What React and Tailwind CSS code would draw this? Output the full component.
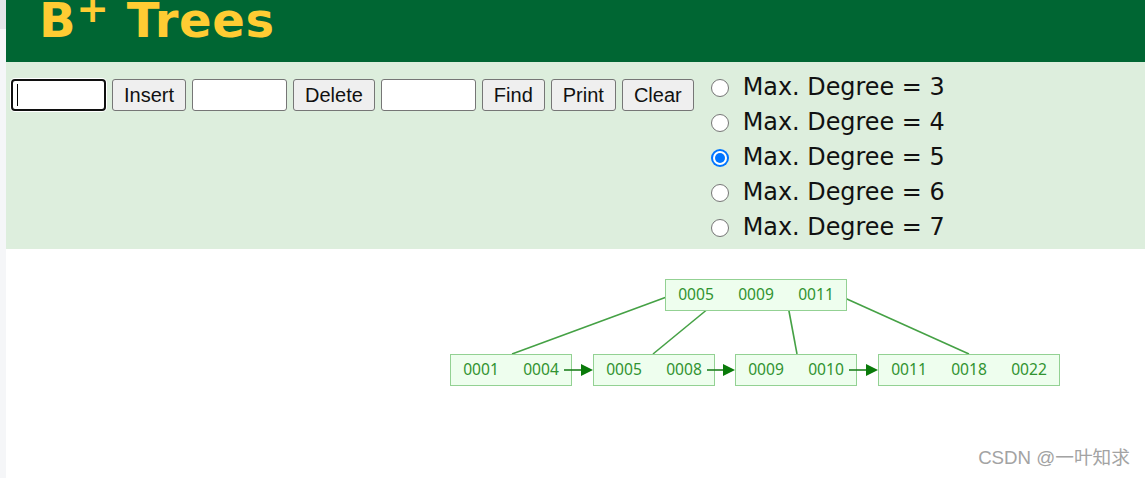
import React from "react";

const leafNodes = [
  { x: 450, w: 122, keys: ["0001", "0004"] },
  { x: 593, w: 122, keys: ["0005", "0008"] },
  { x: 735, w: 122, keys: ["0009", "0010"] },
  { x: 878, w: 182, keys: ["0011", "0018", "0022"] },
];

function Tree() {
  const green = "#45a145";
  return (
    <svg
      width="1139"
      height="229"
      viewBox="6 249 1139 229"
      className="block"
    >
      {/* pointer lines */}
      <g stroke={green} strokeWidth="1.6" fill="none">
        <line x1="672" y1="295" x2="512" y2="354" />
        <line x1="726" y1="294" x2="653" y2="354" />
        <line x1="786" y1="295" x2="797" y2="354" />
        <line x1="838" y1="295" x2="969" y2="354" />
      </g>
      {/* root */}
      <rect x="665.5" y="279.5" width="181" height="31" fill="#eefeee" stroke="#93d193" strokeWidth="1" />
      {["0005", "0009", "0011"].map((k, i) => (
        <text
          key={k}
          x={665 + 31 + 60 * i}
          y="299.5"
          textAnchor="middle"
          fontFamily="'Noto Sans', 'Open Sans', sans-serif"
          fontSize="15.6"
          fill="#319331"
        >
          {k}
        </text>
      ))}
      {/* leaves */}
      {leafNodes.map((n) => (
        <g key={n.x}>
          <rect x={n.x + 0.5} y="354.5" width={n.w - 1} height="31" fill="#eefeee" stroke="#93d193" strokeWidth="1" />
          {n.keys.map((k, i) => (
            <text
              key={k}
              x={n.x + 31 + 60 * i}
              y="374.5"
              textAnchor="middle"
              fontFamily="'Noto Sans', 'Open Sans', sans-serif"
              fontSize="15.6"
              fill="#319331"
            >
              {k}
            </text>
          ))}
        </g>
      ))}
      {/* leaf arrows */}
      {[
        [564, 593],
        [707, 735],
        [849, 878],
      ].map(([a, b]) => (
        <g key={a}>
          <line x1={a} y1="370" x2={b - 10} y2="370" stroke="#1f7f1f" strokeWidth="1.6" />
          <polygon points={`${b - 12},364 ${b},370 ${b - 12},376`} fill="#0a7a0a" />
        </g>
      ))}
    </svg>
  );
}

function Btn({ children }) {
  return (
    <div className="h-[32px] px-[11px] flex items-center bg-[#efefef] border border-[#767676] rounded-[3px] text-[20px] text-[#111] leading-none font-['Liberation_Sans',Arial,sans-serif]">
      {children}
    </div>
  );
}

function Field() {
  return <div className="w-[95px] h-[32px] bg-white border border-[#767676] rounded-[3px]" />;
}

function Radio({ label, checked }) {
  return (
    <div className="flex items-center h-[35px]">
      {checked ? (
        <span className="w-[18px] h-[18px] rounded-full bg-[#0075ff] flex items-center justify-center">
          <span className="w-[14px] h-[14px] rounded-full bg-white flex items-center justify-center">
            <span className="w-[10px] h-[10px] rounded-full bg-[#0075ff]" />
          </span>
        </span>
      ) : (
        <span className="w-[18px] h-[18px] rounded-full bg-white border border-[#767676]" />
      )}
      <span className="ml-[14px] text-[23.9px] leading-[35px] text-[#111] font-['DejaVu_Sans',Verdana,sans-serif]">
        {label}
      </span>
    </div>
  );
}

export default function App() {
  return (
    <div className="w-[1145px] h-[478px] flex bg-white overflow-hidden relative">
      <div className="w-[6px] flex flex-col shrink-0">
        <div className="h-[29px] bg-[#e4e5e9]" />
        <div className="flex-1 bg-[#f5f6f8]" />
      </div>
      <div className="flex-1 flex flex-col">
        <div className="h-[62px] bg-[#006633] overflow-hidden pl-[33px]">
          <h1 className="mt-[-4px] text-[48px] leading-[48px] tracking-[0.6px] font-bold text-[#ffcc33] font-['DejaVu_Sans',Verdana,sans-serif] whitespace-nowrap">
            B<span className="relative top-[-15px] text-[39px] leading-none">+</span> Trees
          </h1>
        </div>
        <div className="h-[187px] bg-[#ddeedd] flex items-start pl-[5px]">
          <div className="flex gap-[6px] pt-[17px]">
            <div className="w-[95px] h-[32px] bg-white border-2 border-[#101010] rounded-[4px] shadow-[0_0_0_1px_#ffffff] flex items-center pl-[4px]">
              <span className="w-[1px] h-[22px] bg-black" />
            </div>
            <Btn>Insert</Btn>
            <Field />
            <Btn>Delete</Btn>
            <Field />
            <Btn>Find</Btn>
            <Btn>Print</Btn>
            <Btn>Clear</Btn>
          </div>
          <div className="ml-[17px] pt-[8px] flex flex-col">
            <Radio label="Max. Degree = 3" />
            <Radio label="Max. Degree = 4" />
            <Radio label="Max. Degree = 5" checked />
            <Radio label="Max. Degree = 6" />
            <Radio label="Max. Degree = 7" />
          </div>
        </div>
        <Tree />
      </div>
      <div className="absolute right-[15px] top-[446px] text-[18.7px] leading-[24px] text-[#a3a3a3] font-['Liberation_Sans','Noto_Sans_CJK_SC',sans-serif] [text-shadow:0_0_1px_#ffffff]">
        CSDN @一叶知求
      </div>
    </div>
  );
}
